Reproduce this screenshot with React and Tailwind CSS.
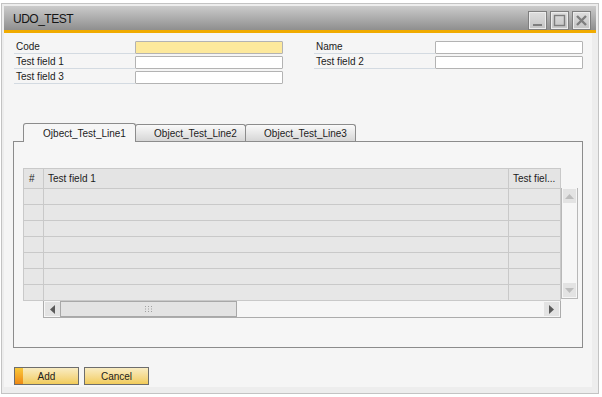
import React from "react";

const labelCls =
  "w-[121px] h-[14px] border-b border-[#d3dae1] pl-[2px] text-[10px] leading-[13px] text-[#1c1c1c]";
const inputCls = "w-[148px] h-[13px] border border-[#b3b3b3] rounded-[1px]";

function FieldRow({ label, yellow }) {
  return (
    <div className="flex items-end h-[14px]">
      <div className={labelCls}>{label}</div>
      <div className={`${inputCls} ${yellow ? "bg-[#fde99c]" : "bg-white"}`}></div>
    </div>
  );
}

function WinButton({ children }) {
  return (
    <div className="w-[19px] h-[19px] border border-[#7e7e7e] bg-gradient-to-b from-[#dedede] to-[#c4c4c4] flex items-center justify-center">
      <div className="w-[17px] h-[17px] border border-[#ececec] flex items-center justify-center">
        {children}
      </div>
    </div>
  );
}

function Tab({ title, active }) {
  if (active) {
    return (
      <div className="relative z-10 -mb-px w-[113px] h-[19px] border border-b-0 border-[#8c8c8c] rounded-t-[3px] bg-[#f6f6f6] flex items-center justify-center pl-[10px] text-[10px] text-[#1c1c1c]">
        {title}
      </div>
    );
  }
  return (
    <div className="w-[111px] h-[17px] border border-b-0 border-[#8c8c8c] rounded-t-[3px] bg-gradient-to-b from-[#fafafa] to-[#d6d6d6] flex items-center justify-center pl-[10px] text-[10px] text-[#1c1c1c] -ml-px">
      {title}
    </div>
  );
}

export default function App() {
  const rows = [0, 1, 2, 3, 4, 5, 6];
  return (
    <div className="w-[602px] h-[397px] bg-white pt-[3px] pl-[1px] font-['Liberation_Sans',Arial,sans-serif] overflow-hidden">
      <div className="w-[598px] h-[391px] border border-[#c3c3c3] bg-[#ededed] p-[2px] flex flex-col">
        {/* title bar */}
        <div className="h-[24px] bg-gradient-to-b from-[#cbcbcb] to-[#8f8f8f] flex items-center pl-[9px] pr-[5px]">
          <span className="text-[12px] tracking-[-0.5px] text-[#141414] mt-[2px]">UDO_TEST</span>
          <div className="ml-auto flex gap-[3px] mt-[4px]">
            <WinButton>
              <svg width="13" height="13" viewBox="0 0 13 13">
                <rect x="2" y="10" width="9" height="2" fill="#7e7e7e" />
              </svg>
            </WinButton>
            <WinButton>
              <svg width="13" height="13" viewBox="0 0 13 13">
                <rect x="1.5" y="1.5" width="10" height="10" fill="none" stroke="#7e7e7e" strokeWidth="1.4" />
              </svg>
            </WinButton>
            <WinButton>
              <svg width="13" height="13" viewBox="0 0 13 13">
                <path d="M2 2 L11 11 M11 2 L2 11" stroke="#7e7e7e" strokeWidth="2.4" />
              </svg>
            </WinButton>
          </div>
        </div>
        <div className="h-[3px] bg-[#f0ab00]"></div>

        {/* body */}
        <div className="flex-1 bg-[#f5f5f5] mr-[4px] mb-[4px] flex flex-col">
          {/* header fields */}
          <div className="flex pt-[7px] pl-[10px] gap-[31px]">
            <div className="flex flex-col gap-[1px]">
              <FieldRow label="Code" yellow />
              <FieldRow label="Test field 1" />
              <FieldRow label="Test field 3" />
            </div>
            <div className="flex flex-col gap-[1px]">
              <FieldRow label="Name" />
              <FieldRow label="Test field 2" />
            </div>
          </div>

          {/* tabs */}
          <div className="mt-[39px] pl-[19px] flex items-end h-[18px]">
            <Tab title="Ojbect_Test_Line1" active />
            <Tab title="Object_Test_Line2" />
            <Tab title="Object_Test_Line3" />
          </div>

          {/* panel */}
          <div className="ml-[9px] w-[570px] h-[207px] border border-[#8c8c8c] bg-[#f6f6f6] pl-[9px] pt-[26px]">
            {/* matrix header */}
            <div className="flex w-[538px] h-[21px] border-t border-l border-[#c9c9c9] bg-[#e4e4e4] text-[10px] text-[#1c1c1c]">
              <div className="w-[20px] border-r border-b border-[#c9c9c9] pl-[5px] leading-[19px]">#</div>
              <div className="w-[465px] border-r border-b border-[#c9c9c9] pl-[4px] leading-[19px]">Test field 1</div>
              <div className="w-[52px] border-r border-b border-[#c9c9c9] pl-[4px] leading-[19px] whitespace-nowrap">Test fiel...</div>
            </div>
            <div className="flex">
              <div className="w-[538px] border-l border-[#c9c9c9]">
                {rows.map((r) => (
                  <div key={r} className="flex h-[16px] bg-[#e7e7e7]">
                    <div className="w-[20px] border-r border-b border-[#c9c9c9]"></div>
                    <div className="w-[465px] border-r border-b border-[#c9c9c9]"></div>
                    <div className="w-[52px] border-r border-b border-[#c9c9c9]"></div>
                  </div>
                ))}
              </div>
              {/* vertical scrollbar */}
              <div className="-mt-px w-[17px] h-[111px] border-l border-r border-b border-[#b8b8b8] bg-[#f6f6f6] flex flex-col items-center justify-between py-[1px]">
                <div className="w-[13px] h-[14px] bg-[#e3e3e3] flex items-center justify-center">
                  <svg width="9" height="5" viewBox="0 0 9 5">
                    <path d="M0 5 L4.5 0 L9 5 Z" fill="#bcbcbc" />
                  </svg>
                </div>
                <div className="w-[13px] h-[14px] bg-[#e3e3e3] flex items-center justify-center">
                  <svg width="9" height="5" viewBox="0 0 9 5">
                    <path d="M0 0 L4.5 5 L9 0 Z" fill="#bcbcbc" />
                  </svg>
                </div>
              </div>
            </div>
            {/* horizontal scrollbar */}
            <div className="ml-[20px] w-[518px] h-[17px] border-l border-r border-b border-[#acacac] bg-[#f6f6f6] flex items-center pl-[1px] pr-[1px]">
              <div className="w-[15px] h-[14px] bg-[#e3e3e3] flex items-center justify-center">
                <svg width="5" height="9" viewBox="0 0 5 9">
                  <path d="M5 0 L0 4.5 L5 9 Z" fill="#5a5a5a" />
                </svg>
              </div>
              <div className="w-[177px] h-[16px] border border-[#a8a8a8] bg-[#e3e3e3] flex items-center justify-center">
                <svg width="8" height="6" viewBox="0 0 8 6">
                  <g fill="#a0a0a0">
                    <rect x="0" y="0" width="1" height="1" />
                    <rect x="3" y="0" width="1" height="1" />
                    <rect x="6" y="0" width="1" height="1" />
                    <rect x="0" y="2.5" width="1" height="1" />
                    <rect x="3" y="2.5" width="1" height="1" />
                    <rect x="6" y="2.5" width="1" height="1" />
                    <rect x="0" y="5" width="1" height="1" />
                    <rect x="3" y="5" width="1" height="1" />
                    <rect x="6" y="5" width="1" height="1" />
                  </g>
                </svg>
              </div>
              <div className="ml-auto w-[15px] h-[14px] bg-[#e3e3e3] flex items-center justify-center">
                <svg width="5" height="9" viewBox="0 0 5 9">
                  <path d="M0 0 L5 4.5 L0 9 Z" fill="#5a5a5a" />
                </svg>
              </div>
            </div>
          </div>

          {/* buttons */}
          <div className="mt-[19px] ml-[10px] flex gap-[5px] text-[10px] text-[#1c1c1c]">
            <div className="relative w-[65px] h-[18px] border border-[#6d6d6d] bg-gradient-to-b from-[#f9ecc2] to-[#f2cb58] flex items-center justify-center">
              <div className="absolute left-0 top-0 bottom-0 w-[8px] bg-gradient-to-b from-[#f8c93a] to-[#ee8812]"></div>
              Add
            </div>
            <div className="w-[65px] h-[18px] border border-[#6d6d6d] bg-gradient-to-b from-[#f9ecc2] to-[#f2cb58] flex items-center justify-center">
              Cancel
            </div>
          </div>
        </div>
      </div>
    </div>
  );
}
